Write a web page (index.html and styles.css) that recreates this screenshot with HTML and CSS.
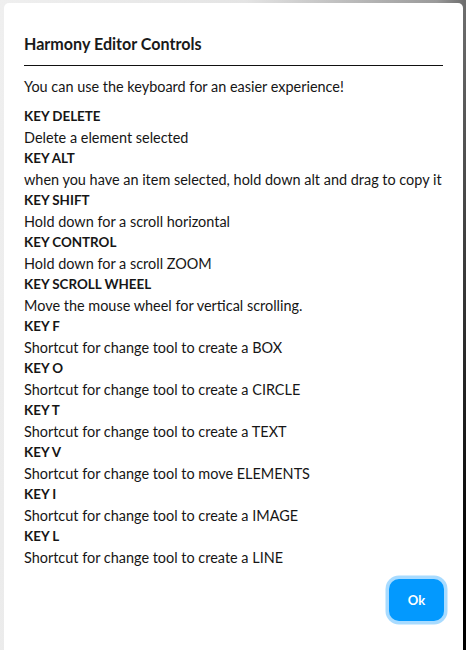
FILE: index.html
```html
<!DOCTYPE html>
<html>
<head>
<meta charset="utf-8">
<link rel="stylesheet" href="styles.css">
</head>
<body>
<div class="modal">
  <h1 class="title">Harmony Editor Controls</h1>
  <hr class="rule">
  <p class="intro">You can use the keyboard for an easier experience!</p>
  <dl class="keys">
    <dt>KEY DELETE</dt><dd>Delete a element selected</dd>
    <dt>KEY ALT</dt><dd>when you have an item selected, hold down alt and drag to copy it</dd>
    <dt>KEY SHIFT</dt><dd>Hold down for a scroll horizontal</dd>
    <dt>KEY CONTROL</dt><dd>Hold down for a scroll ZOOM</dd>
    <dt>KEY SCROLL WHEEL</dt><dd>Move the mouse wheel for vertical scrolling.</dd>
    <dt>KEY F</dt><dd>Shortcut for change tool to create a BOX</dd>
    <dt>KEY O</dt><dd>Shortcut for change tool to create a CIRCLE</dd>
    <dt>KEY T</dt><dd>Shortcut for change tool to create a TEXT</dd>
    <dt>KEY V</dt><dd>Shortcut for change tool to move ELEMENTS</dd>
    <dt>KEY I</dt><dd>Shortcut for change tool to create a IMAGE</dd>
    <dt>KEY L</dt><dd>Shortcut for change tool to create a LINE</dd>
  </dl>
  <div class="actions">
    <button class="ok">Ok</button>
  </div>
</div>
</body>
</html>
```
FILE: styles.css
```css
html, body {
  margin: 0;
  padding: 0;
  height: 100%;
  overflow: hidden;
}
body {
  background: linear-gradient(97deg, #efefef 0%, #e4e4e4 45%, #9a9a9a 80%, #000 98%);
  padding: 3px 3px 0 4px;
  box-sizing: border-box;
  font-family: Lato, "Noto Sans", sans-serif;
  color: #161616;
}
.modal {
  background: #fff;
  border-radius: 5px 5px 0 0;
  height: 700px;
  padding: 27px 20px 0 20px;
  box-sizing: border-box;
}
.title {
  margin: 0;
  font-size: 16.1px;
  font-weight: 700;
  line-height: 28px;
  color: #1a1a1a;
}
.rule {
  margin: 7px 0 0 0;
  border: 0;
  border-top: 1.5px solid #111;
  height: 0;
}
.intro {
  margin: 10px 0 0 0;
  font-size: 14.45px;
  line-height: 21px;
}
.keys {
  margin: 9px 0 0 0;
  font-size: 14.45px;
  line-height: 21px;
}
.keys dt {
  font-weight: 700;
  font-size: 13.4px;
}
.keys dd {
  margin: 0;
}
.actions {
  display: flex;
  justify-content: flex-end;
  margin-top: 11px;
  padding-right: 0;
  margin-right: -1px;
}
.ok {
  width: 55px;
  height: 42px;
  border: 0;
  border-radius: 10px;
  background: #0399fe;
  box-shadow: 0 0 0 3.5px #a8dbff;
  color: #fff;
  font-family: Lato, sans-serif;
  font-weight: 700;
  font-size: 13px;
}
```
